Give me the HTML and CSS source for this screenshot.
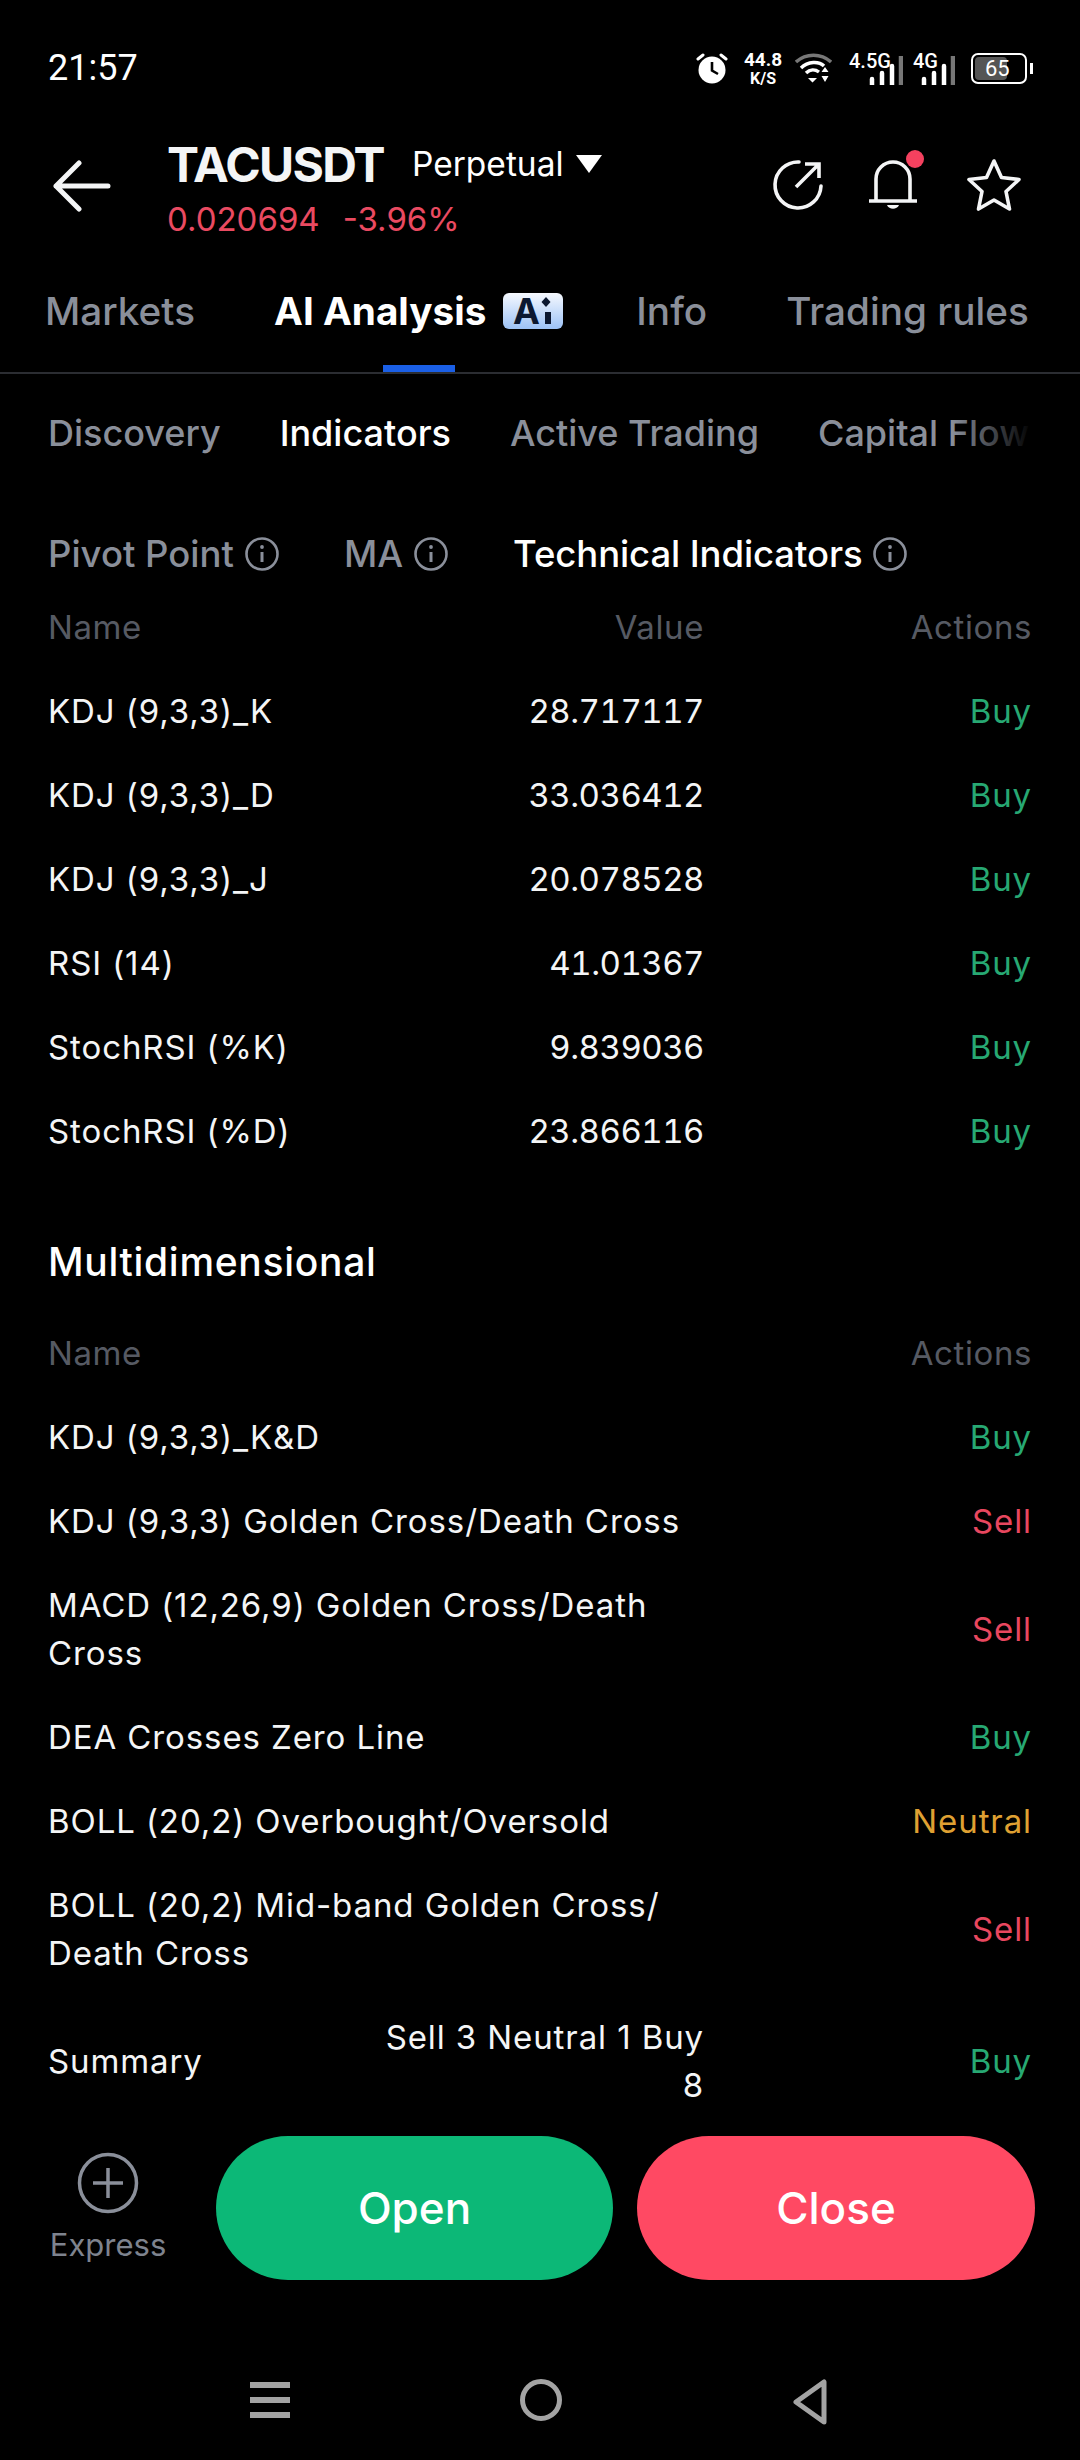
FILE: index.html
```html
<!DOCTYPE html>
<html lang="en">
<head>
    <meta charset="UTF-8">
    <meta name="viewport" content="width=device-width, initial-scale=1.0">
    <title>TACUSDT AI Analysis</title>
    <link rel="stylesheet" href="styles.css">
</head>
<body>

<div class="screen">
    <!-- status bar -->
    <div class="status">
        <span class="clock">21:57</span>
        <div class="status-icons">
            <svg class="alarm" width="32" height="32" viewBox="0 0 32 32">
                <circle cx="16" cy="18" r="13.5" fill="#fff"/>
                <path d="M16 10v8.5l6 3.5" fill="none" stroke="#000" stroke-width="2.6"/>
                <path d="M2 7l5-4M30 7l-5-4" stroke="#fff" stroke-width="3" stroke-linecap="round"/>
            </svg>
            <div class="speed"><span>44.8</span><span class="speed-unit">K/S</span></div>
            <svg class="wifi" width="37" height="30" viewBox="0 0 37 30">
                <path d="M1 9C11 0 26 0 36 9" fill="none" stroke="#777" stroke-width="3.4"/>
                <path d="M6 15C13 8 24 8 29 13" fill="none" stroke="#fff" stroke-width="3.4"/>
                <path d="M11 20c4-4 9-4 13-1" fill="none" stroke="#fff" stroke-width="3.4"/>
                <path d="M13 25h9l-4.500 4.500zM30 14l3.500 5h-7zM26.500 23h7L30 29z" fill="#fff"/>
            </svg>
            <div class="signal">
                <span class="net">4.5G</span>
                <svg width="34" height="30" viewBox="0 0 34 30">
                    <path d="M3 24v6M13 18v12M23 11v19" stroke="#fff" stroke-width="4.500" stroke-linecap="round"/>
                    <path d="M32 1v29" stroke="#777" stroke-width="4.500"/>
                </svg>
            </div>
            <div class="signal signal-4g">
                <span class="net">4G</span>
                <svg width="34" height="30" viewBox="0 0 34 30">
                    <path d="M3 24v6M13 18v12M23 11v19" stroke="#fff" stroke-width="4.500" stroke-linecap="round"/>
                    <path d="M32 1v29" stroke="#777" stroke-width="4.500"/>
                </svg>
            </div>
            <div class="battery"><div class="battery-fill"></div><span>65</span></div>
        </div>
    </div>

    <!-- pair header -->
    <div class="pair">
        <svg class="back" width="58" height="52" viewBox="0 0 58 52">
            <path d="M26 3L3 26l23 23M3 26h52" fill="none" stroke="#f4f5f6" stroke-width="5" stroke-linecap="round" stroke-linejoin="round"/>
        </svg>
        <div class="pair-info">
            <div class="pair-title">
                <span class="symbol">TACUSDT</span>
                <span class="contract">Perpetual</span>
                <svg width="28" height="20" viewBox="0 0 28 20"><path d="M1 1h26L14 19z" fill="#fff"/></svg>
            </div>
            <div class="pair-price"><span>0.020694</span><span>-3.96%</span></div>
        </div>
        <div class="pair-actions">
            <svg width="52" height="52" viewBox="0 0 52 52">
                <path d="M27 3a23 23 0 1 0 22 24" fill="none" stroke="#f4f5f6" stroke-width="3.600" stroke-linecap="round"/>
                <path d="M24 28L47 5M33 5h14v14" fill="none" stroke="#f4f5f6" stroke-width="3.600"/>
            </svg>
            <div class="bell">
                <svg width="50" height="54" viewBox="0 0 50 54">
                    <path d="M8 43V21a17 17 0 0 1 34 0v22M1 43h48" fill="none" stroke="#f4f5f6" stroke-width="3.600"/>
                    <path d="M19 47h12c-2 5-10 5-12 0z" fill="#f4f5f6"/>
                </svg>
                <span class="bell-dot"></span>
            </div>
            <svg width="56" height="54" viewBox="0 0 56 54">
                <path d="M28 3l7.500 16.500L53 21.500 40 33.500 43.500 51 28 42 12.500 51 16 33.500 3 21.500l17.500-2z" fill="none" stroke="#f4f5f6" stroke-width="3.600" stroke-linejoin="round"/>
            </svg>
        </div>
    </div>

    <!-- main tabs -->
    <div class="tabs">
        <span class="tab">Markets</span>
        <span class="tab tab-active">AI Analysis
            <svg class="ai-badge" width="60" height="36" viewBox="0 0 60 36">
                <defs>
                    <linearGradient id="aiFill" x1="0" y1="0" x2="0" y2="1">
                        <stop offset="0" stop-color="#f6f9fe"/>
                        <stop offset="1" stop-color="#9cc2f6"/>
                    </linearGradient>
                </defs>
                <rect width="60" height="36" rx="6" fill="url(#aiFill)"/>
                <text x="10" y="31" class="ai-text">A</text>
                <path d="M43 4l4.500 5-4.500 5-4.500-5z" fill="#0c1830"/>
                <path d="M42 19h6v12h-6z" fill="#0c1830"/>
            </svg>
        </span>
        <span class="tab">Info</span>
        <span class="tab">Trading rules</span>
    </div>

    <!-- sub tabs -->
    <div class="subtabs">
        <span>Discovery</span>
        <span class="on">Indicators</span>
        <span>Active Trading</span>
        <span>Capital Flow</span>
        <div class="fade"></div>
    </div>

    <div class="content">
        <div class="kinds">
            <span class="kind">Pivot Point <svg class="info" viewBox="0 0 36 36"><use href="#infoIcon"/></svg></span>
            <span class="kind">MA <svg class="info" viewBox="0 0 36 36"><use href="#infoIcon"/></svg></span>
            <span class="kind on">Technical Indicators <svg class="info" viewBox="0 0 36 36"><use href="#infoIcon"/></svg></span>
        </div>

        <div class="row row-head">
            <div>Name</div><div class="val">Value</div><div class="act">Actions</div>
        </div>
        <div class="row"><div>KDJ (9,3,3)_K</div><div class="val num">28.717117</div><div class="act buy">Buy</div></div>
        <div class="row"><div>KDJ (9,3,3)_D</div><div class="val num">33.036412</div><div class="act buy">Buy</div></div>
        <div class="row"><div>KDJ (9,3,3)_J</div><div class="val num">20.078528</div><div class="act buy">Buy</div></div>
        <div class="row"><div>RSI (14)</div><div class="val num">41.01367</div><div class="act buy">Buy</div></div>
        <div class="row"><div>StochRSI (%K)</div><div class="val num">9.839036</div><div class="act buy">Buy</div></div>
        <div class="row"><div>StochRSI (%D)</div><div class="val num">23.866116</div><div class="act buy">Buy</div></div>

        <h3 class="section">Multidimensional</h3>

        <div class="row row-wide row-head"><div>Name</div><div class="act">Actions</div></div>
        <div class="row row-wide"><div>KDJ (9,3,3)_K&amp;D</div><div class="act buy">Buy</div></div>
        <div class="row row-wide"><div>KDJ (9,3,3) Golden Cross/Death Cross</div><div class="act sell">Sell</div></div>
        <div class="row row-wide"><div>MACD (12,26,9) Golden Cross/Death Cross</div><div class="act sell">Sell</div></div>
        <div class="row row-wide"><div>DEA Crosses Zero Line</div><div class="act buy">Buy</div></div>
        <div class="row row-wide"><div>BOLL (20,2) Overbought/Oversold</div><div class="act neutral">Neutral</div></div>
        <div class="row row-wide"><div>BOLL (20,2) Mid-band Golden Cross/ Death Cross</div><div class="act sell">Sell</div></div>
        <div class="row"><div>Summary</div><div class="val">Sell 3 Neutral 1 Buy 8</div><div class="act buy">Buy</div></div>
    </div>

    <!-- bottom actions -->
    <div class="footer">
        <div class="express">
            <svg width="62" height="62" viewBox="0 0 62 62">
                <circle cx="31" cy="31" r="28.500" fill="none" stroke="#8a8f9a" stroke-width="3.500"/>
                <path d="M31 16v30M16 31h30" stroke="#8a8f9a" stroke-width="3.500"/>
            </svg>
            <span>Express</span>
        </div>
        <div class="btn btn-open">Open</div>
        <div class="btn btn-close">Close</div>
    </div>

    <div class="navbar">
        <svg width="40" height="42" viewBox="0 0 40 42"><path d="M0 3h40v6H0zM0 18h40v6H0zM0 33h40v6H0z" fill="#a3a3a3"/></svg>
        <svg width="42" height="42" viewBox="0 0 42 42"><circle cx="21" cy="21" r="18.500" fill="none" stroke="#a3a3a3" stroke-width="5"/></svg>
        <svg width="36" height="46" viewBox="0 0 36 46"><path d="M32 3v40L4 23z" fill="none" stroke="#a3a3a3" stroke-width="5" stroke-linejoin="round"/></svg>
    </div>
</div>

<!-- info icon shared by the three labels -->
<svg class="defs" width="0" height="0">
    <symbol id="infoIcon" viewBox="0 0 36 36">
        <circle cx="18" cy="18" r="15.500" fill="none" stroke="#8a8f9a" stroke-width="2.600"/>
        <path d="M18 16v10" stroke="#8a8f9a" stroke-width="3"/>
        <circle cx="18" cy="11" r="1.900" fill="#8a8f9a"/>
    </symbol>
</svg>

</body>
</html>
```

FILE: styles.css
```css
* {
    box-sizing: border-box;
}

html, body {
    margin: 0;
    padding: 0;
    background: #000;
}

body {
    font-family: Inter, "Noto Sans", sans-serif;
    color: #fff;
}

.screen {
    width: 1080px;
    height: 2460px;
    display: flex;
    flex-direction: column;
    overflow: hidden;
    background: #000;
}

/* status bar */
.status {
    height: 136px;
    flex: none;
    display: flex;
    justify-content: space-between;
    align-items: center;
    padding: 0 48px 0 48px;
}

.clock {
    font-family: Roboto, sans-serif;
    font-size: 36px;
}

.status-icons {
    display: flex;
    align-items: center;
    height: 40px;
    margin-right: 5px;
}

.alarm {
    margin-right: 15px;
}

.speed {
    display: flex;
    flex-direction: column;
    align-items: center;
    font-family: Roboto, sans-serif;
    font-weight: 700;
    font-size: 19px;
    line-height: 21px;
    width: 40px;
    margin-right: 12px;
}

.speed-unit {
    font-size: 16px;
    line-height: 17px;
}

.wifi {
    margin-right: 17px;
}

.signal {
    position: relative;
    width: 54px;
    height: 34px;
    display: flex;
    justify-content: flex-end;
    align-items: flex-end;
    margin-right: 10px;
}

.signal-4g {
    width: 42px;
    margin-right: 16px;
}

.net {
    position: absolute;
    left: 0;
    top: 0;
    font-family: Roboto, sans-serif;
    font-size: 20px;
    font-weight: 500;
    line-height: 20px;
}

.battery {
    position: relative;
    width: 56px;
    height: 31px;
    border: 2px solid #fff;
    border-radius: 7px;
    padding: 2px;
    display: flex;
}

.battery::after {
    content: "";
    position: absolute;
    right: -8px;
    top: 8px;
    width: 3px;
    height: 11px;
    background: #fff;
}

.battery-fill {
    width: 32px;
    background: #555;
    border-radius: 4px;
}

.battery span {
    position: absolute;
    left: 12px;
    top: 1px;
    font-family: Roboto, sans-serif;
    font-size: 22px;
    line-height: 26px;
}

/* pair header */
.pair {
    height: 110px;
    flex: none;
    display: flex;
    align-items: flex-start;
    padding-left: 53px;
    position: relative;
}

.back {
    margin-top: 24px;
    flex: none;
}

.pair-info {
    margin-left: 56px;
}

.pair-title {
    display: flex;
    align-items: center;
    height: 56px;
}

.symbol {
    font-size: 48px;
    font-weight: 700;
    color: #f4f5f6;
    letter-spacing: -1.7px;
}

.contract {
    font-size: 33.5px;
    margin-left: 28px;
    margin-right: 11px;
}

.pair-price {
    display: flex;
    gap: 23px;
    font-size: 33px;
    color: #ea4a61;
    line-height: 48px;
    padding-top: 3px;
}

.pair-actions {
    position: absolute;
    left: 772px;
    top: 22px;
    display: flex;
    align-items: center;
    gap: 44px;
}

.pair-actions > svg:last-child {
    margin-left: 4px;
}

.bell {
    position: relative;
    width: 50px;
    height: 54px;
}

.bell-dot {
    position: absolute;
    right: -6px;
    top: -8px;
    width: 18px;
    height: 18px;
    border-radius: 50%;
    background: #f4415f;
}

/* main tabs */
.tabs {
    height: 128px;
    flex: none;
    position: relative;
    display: flex;
    align-items: center;
    gap: 79px;
    padding-left: 45px;
    border-bottom: 2px solid #2b2d32;
    white-space: nowrap;
}

.tab {
    font-size: 38.7px;
    font-weight: 500;
    color: #8a8f9a;
    display: flex;
    align-items: center;
    margin-top: 4px;
}

.tab-active {
    font-weight: 700;
    color: #fff;
    margin-right: -6px;
}

.tab-active::after {
    content: "";
    position: absolute;
    left: 383px;
    bottom: 0;
    width: 72px;
    height: 7px;
    background: #1a5fe6;
}

.ai-badge {
    margin-left: 17px;
    flex: none;
    overflow: visible;
}

.ai-text {
    font-family: Inter, sans-serif;
    font-size: 36px;
    font-weight: 700;
    fill: #0c1830;
}

/* sub tabs */
.subtabs {
    height: 118px;
    flex: none;
    position: relative;
    display: flex;
    align-items: center;
    gap: 59px;
    padding-left: 48px;
    font-size: 36px;
    font-weight: 500;
    color: #8a8f9a;
    overflow: hidden;
    margin-right: 48px;
    white-space: nowrap;
}

.subtabs .on {
    color: #fff;
}

.fade {
    position: absolute;
    right: 0;
    top: 0;
    bottom: 0;
    width: 80px;
    background: linear-gradient(to right, rgba(0,0,0,0), #000);
}

/* indicator tables */
.content {
    flex: 1;
    min-height: 0;
    overflow: hidden;
    padding: 0 48px;
}

.kinds {
    display: flex;
    align-items: center;
    height: 93px;
    padding-top: 30px;
    font-size: 36.500px;
    font-weight: 500;
    color: #8a8f9a;
    gap: 64px;
}

.kind {
    display: flex;
    align-items: center;
}

.kind.on {
    color: #fff;
    letter-spacing: -0.1px;
}

.info {
    width: 36px;
    height: 36px;
    margin-left: 10px;
}

.row {
    display: grid;
    grid-template-columns: 1fr 332px 328px;
    align-items: center;
    padding: 18px 0;
    min-height: 84px;
    font-size: 33px;
    line-height: 48px;
    letter-spacing: 0.9px;
    color: #f4f5f6;
}

.row-wide {
    grid-template-columns: 1fr 320px;
}

.row-wide > div:first-child {
    max-width: 650px;
}

.row-head {
    color: #565a63;
    letter-spacing: 0.6px;
}

.val {
    text-align: right;
}

.num {
    font-variant-numeric: tabular-nums;
    letter-spacing: -0.5px;
}

.act {
    text-align: right;
}

.buy {
    color: #27a873;
}

.sell {
    color: #e8475f;
}

.neutral {
    color: #dfa032;
}

.section {
    margin: 0;
    padding: 66px 0 26px;
    font-size: 39px;
    font-weight: 500;
    line-height: 46px;
    letter-spacing: 0.7px;
}

/* bottom actions */
.footer {
    height: 230px;
    flex: none;
    display: flex;
    align-items: flex-start;
    padding: 26px 45px 0 45px;
}

.express {
    width: 126px;
    margin-right: 45px;
    flex: none;
    display: flex;
    flex-direction: column;
    align-items: center;
    font-size: 31px;
    color: #7e838e;
    padding-top: 16px;
    gap: 12px;
}

.btn {
    height: 144px;
    width: 397px;
    flex: none;
    border-radius: 72px;
    display: flex;
    align-items: center;
    justify-content: center;
    font-size: 44px;
    font-weight: 500;
}

.btn-open {
    background: #0cb877;
}

.btn-close {
    background: #ff4963;
    margin-left: 24px;
    width: 398px;
}

.navbar {
    height: 120px;
    flex: none;
    display: flex;
    justify-content: center;
    align-items: flex-start;
    gap: 230px;
    padding: 39px 3px 0 0;
}

.defs {
    position: absolute;
}
```
